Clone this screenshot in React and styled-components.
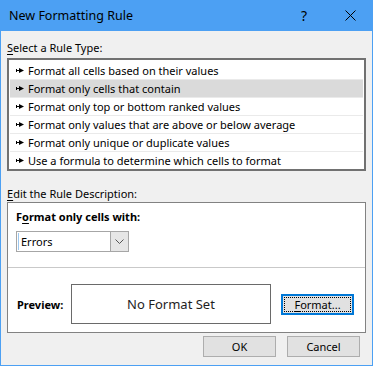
import React from 'react';
import styled, { createGlobalStyle } from 'styled-components';

const GlobalStyle = createGlobalStyle`
  html, body {
    margin: 0;
    padding: 0;
    background: #f0f0f0;
  }
  body {
    font-family: "Noto Sans", "Liberation Sans", sans-serif;
    font-size: 11px;
    color: #000;
  }
`;

const Window = styled.div`
  width: 373px;
  height: 366px;
  box-sizing: border-box;
  display: flex;
  flex-direction: column;
  background: #f0f0f0;
  border: 1px solid #4ca0f3;
  border-top: none;
`;

const TitleBar = styled.div`
  height: 31px;
  margin: 0 -1px;
  flex-shrink: 0;
  background: #4ca0f3;
  display: flex;
  align-items: center;
  padding: 0 0 1px 9px;
  box-sizing: border-box;
  font-size: 12.5px;
  color: #000;
`;

const Title = styled.span`
  flex: 1;
`;

const TitleButton = styled.div`
  width: 46px;
  height: 30px;
  display: flex;
  align-items: center;
  justify-content: center;
  font-size: 14px;
`;

const Body = styled.div`
  flex: 1;
  display: flex;
  flex-direction: column;
  padding: 0 6px;
`;

const SectionLabel = styled.div`
  line-height: 16px;
  height: 16px;
  margin-top: ${p => p.$top}px;
  margin-bottom: ${p => p.$bottom}px;
  font-weight: ${p => (p.$bold ? 700 : 400)};
`;

const Key = styled.span`
  text-decoration: underline;
  text-underline-offset: 2px;
`;

const ListBox = styled.div`
  border: 2px solid #717171;
  background: #fff;
  padding: 1px 1px 0;
  height: 113px;
  box-sizing: border-box;
`;

const Row = styled.div`
  height: 18px;
  box-sizing: border-box;
  display: flex;
  align-items: center;
  padding-left: 6px;
  gap: 4px;
  background: ${p => (p.$selected ? '#dadada' : '#fff')};
  border-top: 1px solid ${p => (p.$first ? 'transparent' : '#eaeaea')};
  line-height: 16px;
`;

const DescBox = styled.div`
  border: 1px solid #828282;
  background: #fff;
  height: 131px;
  box-sizing: border-box;
  display: flex;
  flex-direction: column;
`;

const DescTop = styled.div`
  height: 65px;
  box-sizing: border-box;
  padding: 6px 0 0 8px;
  border-bottom: 1px solid #c9c9c9;
`;

const Combo = styled.div`
  margin-top: 6px;
  width: 113px;
  height: 21px;
  box-sizing: border-box;
  border: 1px solid #a6a6a6;
  display: flex;
  align-items: stretch;
  background: #fff;
`;

const ComboText = styled.div`
  flex: 1;
  display: flex;
  align-items: center;
  padding-left: 2px;
  border-left: 1px solid #9cc8f0;
  margin: 1px 0 1px 1px;
`;

const ComboButton = styled.div`
  width: 17px;
  background: #e6e6e6;
  border-left: 1px solid #a6a6a6;
  display: flex;
  align-items: center;
  justify-content: center;
`;

const PreviewRow = styled.div`
  flex: 1;
  display: flex;
  align-items: center;
  padding: 8px 0 0 9px;
`;

const PreviewLabel = styled.div`
  width: 54px;
  font-weight: 700;
`;

const PreviewBox = styled.div`
  width: 200px;
  height: 40px;
  box-sizing: border-box;
  border: 1px solid #6a6a6a;
  display: flex;
  align-items: center;
  justify-content: center;
  font-size: 13px;
  color: #1e1e1e;
`;

const Button = styled.div`
  width: 73px;
  height: 21px;
  box-sizing: border-box;
  border: ${p => (p.$focused ? '2px solid #0078d7' : '1px solid #adadad')};
  background: #e1e1e1;
  display: flex;
  align-items: center;
  justify-content: center;
  position: relative;
  margin-left: ${p => p.$left || 0}px;
`;

const FocusRing = styled.span`
  position: absolute;
  inset: 1px;
  border: 1px dotted #000;
`;

const ButtonRow = styled.div`
  display: flex;
  justify-content: flex-end;
  margin-top: 3px;
  padding-right: 6px;
  gap: 11px;
`;

const Arrow = () => (
  <svg width="8" height="5" viewBox="0 0 8 5">
    <rect x="0" y="1" width="1" height="3" fill="#000" />
    <rect x="0" y="2" width="4" height="1" fill="#000" />
    <polygon points="3,0 8,2.5 3,5" fill="#000" />
  </svg>
);

const rules = [
  'Format all cells based on their values',
  'Format only cells that contain',
  'Format only top or bottom ranked values',
  'Format only values that are above or below average',
  'Format only unique or duplicate values',
  'Use a formula to determine which cells to format',
];

export default function App() {
  return (
    <>
      <GlobalStyle />
      <Window>
        <TitleBar>
          <Title>New Formatting Rule</Title>
          <TitleButton>?</TitleButton>
          <TitleButton>
            <svg width="11" height="11" viewBox="0 0 11 11">
              <path d="M0.5 0.5L10.5 10.5M10.5 0.5L0.5 10.5" stroke="#000" strokeWidth="1" />
            </svg>
          </TitleButton>
        </TitleBar>
        <Body>
          <SectionLabel $top={9} $bottom={2}>
            <Key>S</Key>elect a Rule Type:
          </SectionLabel>
          <ListBox>
            {rules.map((r, i) => (
              <Row key={r} $first={i === 0} $selected={i === 1}>
                <Arrow />
                <span>{r}</span>
              </Row>
            ))}
          </ListBox>
          <SectionLabel $top={15} $bottom={0}>
            <Key>E</Key>dit the Rule Description:
          </SectionLabel>
          <DescBox>
            <DescTop>
              <SectionLabel $top={0} $bottom={0} $bold>
                F<Key>o</Key>rmat only cells with:
              </SectionLabel>
              <Combo>
                <ComboText>Errors</ComboText>
                <ComboButton>
                  <svg width="9" height="5" viewBox="0 0 9 5">
                    <path d="M0.5 0.5L4.5 4.5L8.5 0.5" stroke="#555" strokeWidth="1" fill="none" />
                  </svg>
                </ComboButton>
              </Combo>
            </DescTop>
            <PreviewRow>
              <PreviewLabel>Preview:</PreviewLabel>
              <PreviewBox>No Format Set</PreviewBox>
              <Button $focused $left={10}>
                <FocusRing />
                <span><Key>F</Key>ormat...</span>
              </Button>
            </PreviewRow>
          </DescBox>
          <ButtonRow>
            <Button>OK</Button>
            <Button>Cancel</Button>
          </ButtonRow>
        </Body>
      </Window>
    </>
  );
}
